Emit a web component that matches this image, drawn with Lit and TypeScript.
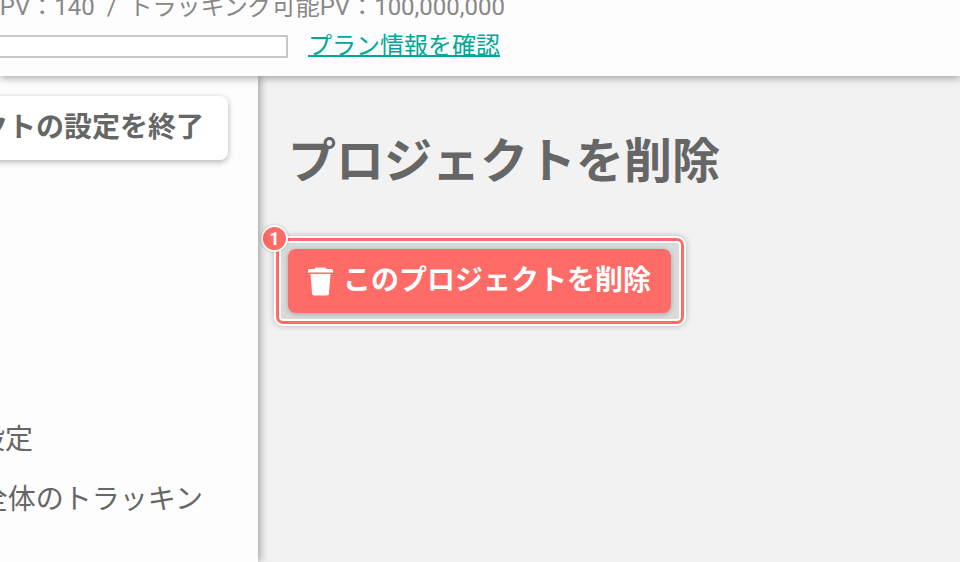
import { LitElement, html, css } from "lit";
import { customElement } from "lit/decorators.js";

@customElement("app-root")
export class AppRoot extends LitElement {
  static styles = css`
    :host {
      display: block;
      width: 960px;
      height: 562px;
      overflow: hidden;
      font-family: Roboto, "Noto Sans CJK JP", sans-serif;
      color: #666;
      background: #f2f2f2;
    }
    .page { display: flex; flex-direction: column; height: 562px; }
    header {
      position: relative;
      z-index: 2;
      height: 76px;
      flex: none;
      background: #fdfdfd;
      box-shadow: 0 2px 8px rgba(0, 0, 0, 0.35);
      overflow: hidden;
    }
    .plan { width: 505px; display: flex; flex-direction: column; margin-top: -10px; }
    .usage {
      font-size: 24px;
      line-height: 35px;
      height: 35px;
      color: #888;
      white-space: nowrap;
      display: flex;
      justify-content: flex-end;
    }
    .quota { display: flex; align-items: center; gap: 20px; margin-top: 6px; padding-right: 5px; }
    .bar { flex: 1; height: 23px; box-sizing: border-box; border: 2px solid #c8c8c8; border-left: 0; background: #fff; }
    a {
      font-size: 24px;
      line-height: 30px;
      color: #00a896;
      text-decoration: underline;
      text-decoration-thickness: 2px;
      white-space: nowrap;
    }
    .body { flex: 1; display: flex; min-height: 0; }
    aside {
      position: relative;
      z-index: 1;
      width: 258px;
      flex: none;
      background: #fdfdfd;
      box-shadow: 2px 0 8px rgba(0, 0, 0, 0.35);
      overflow: hidden;
      box-sizing: border-box;
      padding: 20px 30px 0 0;
      display: flex;
      flex-direction: column;
    }
    .exit {
      height: 64px;
      flex: none;
      margin-left: -40px;
      box-sizing: border-box;
      background: #fff;
      border-radius: 8px;
      box-shadow: 0 2px 6px rgba(0, 0, 0, 0.3);
      display: flex;
      align-items: center;
      justify-content: flex-end;
      padding: 0 24px 7px 0;
      font-size: 28px;
      font-weight: 700;
      white-space: nowrap;
    }
    .item {
      display: flex;
      justify-content: flex-end;
      font-size: 28px;
      line-height: 40px;
      white-space: nowrap;
      color: #666;
    }
    .one { margin-top: 260px; padding-right: 195px; }
    .two { margin-top: 20px; padding-right: 25px; }
    main { flex: 1; padding: 52px 0 0 30px; min-width: 0; }
    h1 { margin: 0; font-size: 48px; line-height: 68px; font-weight: 700; color: #666; white-space: nowrap; }
    .spot {
      position: relative;
      display: inline-flex;
      margin: 42px 0 0 -12px;
      padding: 8px 10px 8px 9px;
      border: 3px solid #ff6b66;
      border-radius: 7px;
      outline: 2px solid #fff;
      box-shadow: inset 0 0 0 2px #fff, 0 0 6px 2px rgba(0, 0, 0, 0.25);
      background: #dadada;
    }
    .danger {
      height: 64px;
      width: 383px;
      box-sizing: border-box;
      border: 0;
      border-radius: 8px;
      background: #ff6b66;
      box-shadow: 0 1px 5px rgba(0, 0, 0, 0.25);
      color: #fff;
      font-family: inherit;
      font-size: 28px;
      font-weight: 700;
      display: flex;
      align-items: center;
      gap: 10px;
      padding: 0 0 6px 20px;
      white-space: nowrap;
    }
    .danger svg { width: 25px; height: 29px; flex: none; margin-top: 7px; }
    .badge {
      position: absolute;
      left: -18px;
      top: -16px;
      width: 27px;
      height: 27px;
      box-sizing: border-box;
      border: 2px solid #fff;
      border-radius: 50%;
      background: #ff6b66;
      box-shadow: 0 0 3px rgba(0, 0, 0, 0.25);
      color: #fff;
      font-size: 18px;
      font-weight: 700;
      display: flex;
      align-items: center;
      justify-content: center;
    }
  `;

  render() {
    return html`
      <div class="page">
        <header>
          <div class="plan">
            <div class="usage">PV：140 &nbsp;/&nbsp; トラッキング可能PV：100,000,000</div>
            <div class="quota">
              <div class="bar"></div>
              <a href="#">プラン情報を確認</a>
            </div>
          </div>
        </header>
        <div class="body">
          <aside>
            <div class="exit">プロジェクトの設定を終了</div>
            <div class="item one">プロジェクトの設定</div>
            <div class="item two">全体のトラッキン</div>
          </aside>
          <main>
            <h1>プロジェクトを削除</h1>
            <div class="spot">
              <span class="badge">1</span>
              <button class="danger">
                <svg viewBox="0 0 25 29" aria-hidden="true">
                  <path fill="#fff" d="M8 .5h9a1.500 1.500 0 0 1 1.300 1.500h5.200A1.500 1.500 0 0 1 25 3.500v2H0v-2A1.500 1.500 0 0 1 1.500 2h5.200A1.500 1.500 0 0 1 8 .5z" />
                  <path fill="#fff" d="M2.500 7h20L21 26a2.500 2.500 0 0 1-2.500 2.500h-12A2.500 2.500 0 0 1 4 26z" />
                </svg>
                このプロジェクトを削除
              </button>
            </div>
          </main>
        </div>
      </div>
    `;
  }
}
